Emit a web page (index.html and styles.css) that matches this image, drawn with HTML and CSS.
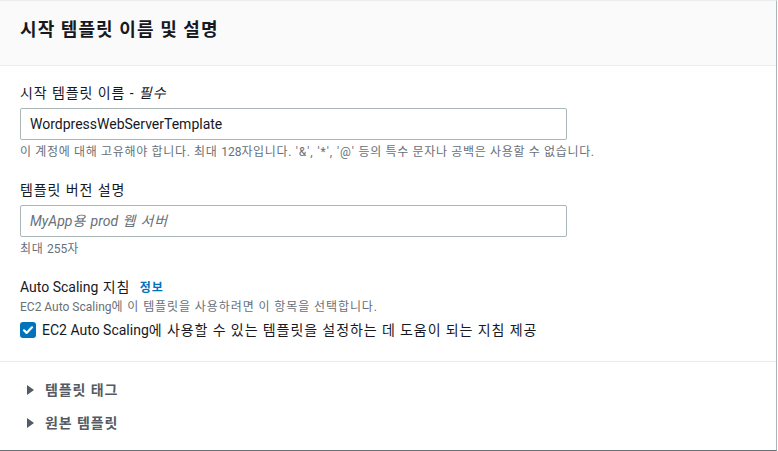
FILE: index.html
```html
<!DOCTYPE html>
<html lang="ko">
<head>
<meta charset="utf-8">
<link rel="stylesheet" href="styles.css">
</head>
<body>
<div class="card">
  <div class="card-header">
    <h2 class="title">시작 템플릿 이름 및 설명</h2>
  </div>
  <div class="card-body">
    <div class="field">
      <label class="label">시작 템플릿 이름 - <i>필수</i></label>
      <div class="input">WordpressWebServerTemplate</div>
      <div class="hint">이 계정에 대해 고유해야 합니다. 최대 <span class="en">128</span>자입니다. <span class="en sym">'&amp;', '*', '@'</span> 등의 특수 문자나 공백은 사용할 수 없습니다.</div>
    </div>
    <div class="field">
      <label class="label">템플릿 버전 설명</label>
      <div class="input placeholder"><span class="en">MyApp</span>용 <span class="en">prod</span> 웹 서버</div>
      <div class="hint">최대 <span class="en">255</span>자</div>
    </div>
    <div class="field">
      <div class="label"><span class="en">Auto Scaling</span> 지침 <a class="info">정보</a></div>
      <div class="desc"><span class="en">EC2 Auto Scaling</span>에 이 템플릿을 사용하려면 이 항목을 선택합니다.</div>
      <div class="check-row">
        <span class="checkbox">
          <svg width="16" height="16" viewBox="0 0 16 16"><path d="M4 8.3l2.6 2.6L12 5.3" fill="none" stroke="#fff" stroke-width="2.2" stroke-linecap="round" stroke-linejoin="round"/></svg>
        </span>
        <span class="check-label"><span class="en">EC2 Auto Scaling</span>에 사용할 수 있는 템플릿을 설정하는 데 도움이 되는 지침 제공</span>
      </div>
    </div>
  </div>
  <div class="card-footer">
    <div class="expander"><span class="caret"></span>템플릿 태그</div>
    <div class="expander"><span class="caret"></span>원본 템플릿</div>
  </div>
</div>
</body>
</html>
```
FILE: styles.css
```css
* { box-sizing: border-box; }
html, body {
  margin: 0;
  padding: 0;
  background: #fff;
}
body {
  font-family: "Roboto", "Noto Sans CJK KR", sans-serif;
  letter-spacing: 0.065em;
  color: #16191f;
  font-size: 14px;
}
.en { letter-spacing: 0; }
.en.sym { letter-spacing: 0.08em; }
.card {
  width: 777px;
  height: 451px;
  border-top: 1px solid #eaeded;
  border-right: 1px solid #aab7b8;
  border-bottom: 1px solid #687078;
  background: #fff;
  display: flex;
  flex-direction: column;
}
.card-header {
  height: 65px;
  background: #fafafa;
  border-bottom: 1px solid #eaeded;
  padding: 0 20px;
  display: flex;
  align-items: center;
}
.title {
  margin: 0;
  font-size: 18px;
  font-weight: 700;
  line-height: 24px;
  letter-spacing: 0.06em;
  color: #16191f;
  margin-top: -6px;
}
.card-body {
  padding: 16px 20px 20px;
  border-bottom: 1px solid #eaeded;
  display: flex;
  flex-direction: column;
  gap: 19px;
}
.field {
  display: flex;
  flex-direction: column;
}
.label {
  font-size: 14px;
  line-height: 22px;
  color: #16191f;
}
.label i { font-style: italic; }
.input {
  margin-top: 4px;
  width: 547px;
  height: 32px;
  border: 1px solid #aab7b8;
  border-radius: 2px;
  padding: 0 9px;
  font-size: 14px;
  line-height: 30px;
  letter-spacing: 0;
  color: #16191f;
}
.input.placeholder {
  color: #687078;
  font-style: italic;
  letter-spacing: 0.065em;
}
.hint {
  margin-top: 4px;
  font-size: 12px;
  line-height: 16px;
  letter-spacing: 0.055em;
  color: #687078;
}
.info {
  color: #0073bb;
  font-size: 12px;
  font-weight: 700;
  margin-left: 5px;
}
.desc {
  font-size: 12px;
  line-height: 16px;
  color: #687078;
}
.check-row {
  display: flex;
  align-items: center;
  margin-top: 4px;
  height: 22px;
}
.checkbox {
  width: 16px;
  height: 16px;
  border-radius: 3px;
  background: #0073bb;
  display: inline-flex;
  margin-right: 6px;
}
.check-label {
  font-size: 14px;
  line-height: 22px;
  color: #16191f;
}
.card-footer {
  flex: 1;
  padding: 17px 20px 0;
  display: flex;
  flex-direction: column;
  gap: 11px;
}
.expander {
  display: flex;
  align-items: center;
  font-size: 14px;
  font-weight: 700;
  line-height: 22px;
  color: #545b64;
}
.caret {
  width: 0;
  height: 0;
  border-top: 5px solid transparent;
  border-bottom: 5px solid transparent;
  border-left: 7px solid #545b64;
  margin: 0 11px 0 7px;
}
```
